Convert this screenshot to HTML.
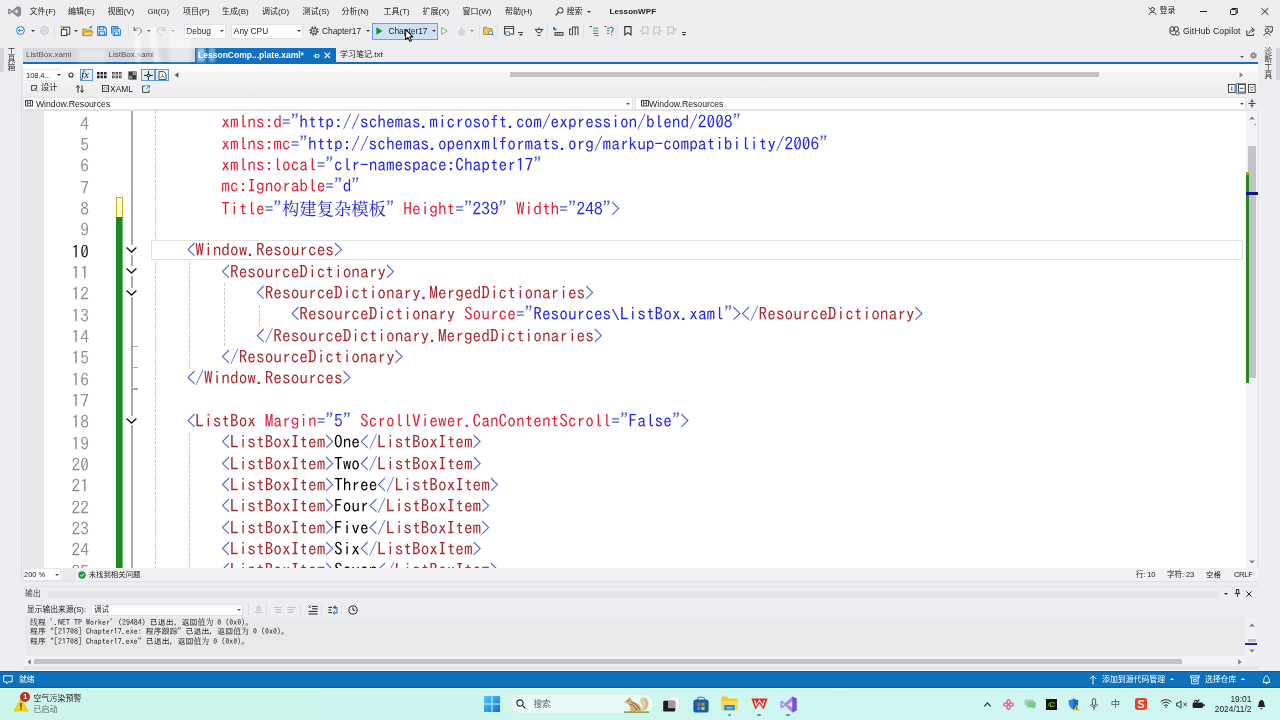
<!DOCTYPE html>
<html lang="zh-CN">
<head>
<meta charset="utf-8">
<title>LessonWPF - Microsoft Visual Studio</title>
<style>
*{box-sizing:border-box;margin:0;padding:0}
html,body{width:1280px;height:720px;overflow:hidden;background:#eeeef2}
body{font-family:"Liberation Sans","Noto Sans CJK SC",sans-serif;font-size:8px;color:#1e1e1e;position:relative}
.abs,#app *{position:absolute}
#app{position:absolute;left:0;top:0;width:1280px;height:720px;overflow:hidden;background:#eeeef2;filter:blur(.35px)}
#app span{position:static}
.tx{white-space:nowrap;line-height:10px;height:10px}
svg{overflow:visible}

.m{top:6.9px}
.dd{width:0;height:0;border-left:2.1px solid transparent;border-right:2.1px solid transparent;border-top:2.4px solid #3c3c3c}
.du{width:0;height:0;border-left:2.6px solid transparent;border-right:2.6px solid transparent;border-bottom:2.9px solid #3c3c3c}
.sep{top:3px;width:1px;height:12.5px;background:#dfe0e4}
.combo{background:#fff;border:1px solid #e2e3e8}

.vc{font-size:8px;color:#3a3a3a;width:8px;text-align:center}
.vt{writing-mode:vertical-rl;height:auto;width:10px;line-height:10px;font-size:7.8px;color:#444;letter-spacing:0}

.ot{left:7.6px;height:9.75px;line-height:9.75px;font-size:7.9px;font-family:"IPAGothic","Noto Serif CJK SC","Noto Sans CJK SC",monospace;color:#1e1e1e;white-space:pre;letter-spacing:.05px}
.run{top:26.4px;width:3.4px;height:1.8px;border-radius:1px;background:#7c8a88}
/* ---------- editor ---------- */
#editor{left:22.5px;top:111.3px;width:1223.5px;height:456.8px;background:#fff;overflow:hidden}
#editor .gut{left:0;top:0;width:21.2px;height:100%;background:#e6e7e8}
.ln{left:-.3px;width:66.6px;text-align:right;font:17.33px/21.333px "IPAGothic","Liberation Mono",monospace;color:#8f8f8f;height:21.333px;white-space:pre}
.ln.cur{color:#1e1e1e}
.cl{margin-top:-1.3px;font:17.33px/21.333px "IPAGothic","Liberation Mono",monospace;height:21.333px;white-space:pre;color:#000}
.cl .d{color:#5562d4}
.cl .v{color:#2626e0}
.cl .e{color:#a62c34}
.cl .a{color:#e2223a}
.cl .t{color:#000}
.cl .bs{display:inline-block;width:8.667px;font-family:'Liberation Mono',monospace;font-size:15px;text-indent:-.3px;vertical-align:baseline}
.cl .cj{font-family:"Noto Serif CJK SC","Noto Sans CJK SC",serif}
.guide{width:1px;background:repeating-linear-gradient(180deg,#c9c9c9 0 3px,transparent 3px 4.6px)}
</style>
</head>
<body>
<div id="app">


<!-- ================= TITLE / MENU BAR ================= -->
<div id="menubar" style="left:0;top:0;width:1280px;height:22px;background:#eeeef1">
  <svg style="left:8px;top:5.5px" width="13" height="11" viewBox="0 0 26 22"><path d="M19 0 L26 3 V19 L19 22 L8 12.5 L3 17 L0 15.5 V6.5 L3 5 L8 9.5 Z M19 6.5 L12.5 11 L19 15.5 Z M2.8 8.3 V13.7 L5.8 11 Z" fill="#8c8c93" fill-rule="evenodd"/></svg>
  <div class="tx m" style="left:29.5px">文件(F)</div>
  <div class="tx m" style="left:68px">编辑(E)</div>
  <div class="tx m" style="left:107.5px">视图(V)</div>
  <div class="tx m" style="left:147.5px">Git(G)</div>
  <div class="tx m" style="left:183px">项目(P)</div>
  <div class="tx m" style="left:222px">生成(B)</div>
  <div class="tx m" style="left:262px">调试(D)</div>
  <div class="tx m" style="left:302.5px">测试(S)</div>
  <div class="tx m" style="left:341.5px">分析(N)</div>
  <div class="tx m" style="left:383.5px">工具(T)</div>
  <div class="tx m" style="left:422.5px">扩展(X)</div>
  <div class="tx m" style="left:462.5px">窗口(W)</div>
  <div class="tx m" style="left:505px">帮助(H)</div>
  <svg style="left:554.5px;top:6.5px" width="9" height="9" viewBox="0 0 9 9"><circle cx="5.4" cy="3.4" r="2.7" fill="none" stroke="#333" stroke-width="1"/><path d="M3.4 5.4 L0.6 8.3" stroke="#333" stroke-width="1.1"/></svg>
  <div class="tx m" style="left:566.5px">搜索</div>
  <div class="dd" style="left:586.5px;top:10.5px"></div>
  <div class="tx m" style="left:609.5px;font-weight:bold;letter-spacing:.1px">LessonWPF</div>
  <!-- sign in -->
  <svg style="left:1147.5px;top:7px" width="9" height="8" viewBox="0 0 9 8"><circle cx="4.6" cy="2.4" r="1.9" fill="none" stroke="#333" stroke-width="1"/><path d="M1 7.6 C1.6 4.6 7.4 4.6 8.2 7.6" fill="none" stroke="#333" stroke-width="1"/><path d="M0.3 0.5 L2.2 2.2" stroke="#333" stroke-width=".9"/></svg>
  <div class="tx m" style="left:1159.5px;top:5.6px">登录</div>
  <div style="left:1200px;top:10.6px;width:6.6px;height:1px;background:#222"></div>
  <svg style="left:1230px;top:8px" width="8" height="7" viewBox="0 0 8 7"><rect x=".5" y="1.6" width="5.6" height="4.9" rx="1" fill="none" stroke="#222" stroke-width="1"/><path d="M2 1.2 V.5 H7.3 V5.2 H6.6" fill="none" stroke="#222" stroke-width="1"/></svg>
  <svg style="left:1261px;top:8px" width="8" height="7" viewBox="0 0 8 7"><path d="M.4 .2 L7.4 6.8 M7.4 .2 L.4 6.8" stroke="#222" stroke-width="1"/></svg>
</div>

<!-- ================= MAIN TOOLBAR ================= -->
<div id="toolbar" style="left:0;top:22px;width:1280px;height:25px;background:#eeeef1">
  <!-- back / forward -->
  <svg style="left:16.2px;top:4.2px" width="9" height="9" viewBox="0 0 9 9"><circle cx="4.5" cy="4.5" r="3.9" fill="#f4f9ff" stroke="#1b7fd6" stroke-width="1"/><path d="M6.6 4.5 H2.6 M4.2 2.8 L2.5 4.5 L4.2 6.2" fill="none" stroke="#1b7fd6" stroke-width=".9"/></svg>
  <div class="dd" style="left:31px;top:8px"></div>
  <svg style="left:40px;top:4.2px" width="9" height="9" viewBox="0 0 9 9"><circle cx="4.5" cy="4.5" r="3.9" fill="#e3e3e7" stroke="#c9c9ce" stroke-width="1"/><path d="M2.4 4.5 H6.4" stroke="#c4c4ca" stroke-width=".9"/></svg>
  <div class="sep" style="left:53.5px"></div>
  <!-- new item -->
  <svg style="left:60px;top:3px" width="12" height="12" viewBox="0 0 12 12"><rect x="3.6" y="2.2" width="6.2" height="7" fill="#f7f7f7" stroke="#3a3a3a" stroke-width="1"/><rect x="1.4" y="4.6" width="5.4" height="6" fill="#f7f7f7" stroke="#3a3a3a" stroke-width="1"/><path d="M1.8 .4 V3.4 M.3 1.9 H3.3" stroke="#c89a16" stroke-width="1"/></svg>
  <div class="dd" style="left:74.2px;top:8px"></div>
  <!-- open -->
  <svg style="left:82px;top:3.5px" width="12" height="11" viewBox="0 0 12 11"><path d="M.8 9.6 V3 H4.2 L5.2 4.2 H9.4 V9.6 Z" fill="#e8c35a" stroke="#b98a12" stroke-width=".9"/><path d="M.8 9.6 L2.6 5.8 H11 L9.4 9.6 Z" fill="#f2d679" stroke="#b98a12" stroke-width=".8"/><path d="M7 2.4 L9.6 .6 M9.6 .6 H8 M9.6 .6 V2.2" fill="none" stroke="#2a7fcf" stroke-width=".9"/></svg>
  <!-- save -->
  <svg style="left:97.3px;top:4px" width="10" height="10" viewBox="0 0 10 10"><path d="M.7 .7 H7.6 L9.3 2.4 V9.3 H.7 Z" fill="#e6f1fb" stroke="#1c7ad1" stroke-width="1.1"/><rect x="2.6" y=".9" width="4.2" height="2.8" fill="none" stroke="#1c7ad1" stroke-width=".9"/><rect x="2.4" y="5.8" width="5.2" height="3.4" fill="none" stroke="#1c7ad1" stroke-width=".9"/></svg>
  <svg style="left:110.8px;top:4px" width="10" height="10" viewBox="0 0 10 10"><path d="M2 2 H8 L9.4 3.4 V9.4 H2 Z" fill="#e6f1fb" stroke="#1c7ad1" stroke-width="1"/><path d="M.6 7.6 V.6 H7" fill="none" stroke="#1c7ad1" stroke-width="1"/><rect x="3.6" y="6" width="4" height="3.2" fill="none" stroke="#1c7ad1" stroke-width=".8"/><rect x="3.8" y="2.2" width="3" height="2" fill="none" stroke="#1c7ad1" stroke-width=".8"/></svg>
  <div class="sep" style="left:127.5px"></div>
  <!-- undo / redo -->
  <svg style="left:132.5px;top:4px" width="10" height="10" viewBox="0 0 10 10"><path d="M1.2 1 V4.4 H4.6" fill="none" stroke="#3a3a3a" stroke-width="1"/><path d="M1.4 4.2 C3 1.2 7.4 1.2 8.2 4 C8.8 6.2 6.6 8.4 4.4 9.4" fill="none" stroke="#3a3a3a" stroke-width="1"/></svg>
  <div class="dd" style="left:146.5px;top:8px"></div>
  <svg style="left:155.5px;top:4px;opacity:.35" width="10" height="10" viewBox="0 0 10 10"><path d="M8.8 1 V4.4 H5.4" fill="none" stroke="#8a8a8a" stroke-width="1"/><path d="M8.6 4.2 C7 1.2 2.6 1.2 1.8 4 C1.2 6.2 3.4 8.4 5.6 9.4" fill="none" stroke="#8a8a8a" stroke-width="1"/></svg>
  <div class="dd" style="left:170.5px;top:8px;opacity:.45"></div>
  <!-- Debug combo -->
  <div class="combo" style="left:183.7px;top:1.7px;width:42.5px;height:15.2px"></div>
  <div class="tx" style="left:186.2px;top:4.2px;font-size:8.4px">Debug</div>
  <div class="dd" style="left:220.2px;top:8.3px"></div>
  <!-- Any CPU combo -->
  <div class="combo" style="left:231px;top:1.7px;width:72.3px;height:15.2px"></div>
  <div class="tx" style="left:233.8px;top:4.2px;font-size:8.4px">Any CPU</div>
  <div class="dd" style="left:297.2px;top:8.3px"></div>
  <!-- startup project -->
  <svg style="left:308.6px;top:4px" width="10" height="10" viewBox="0 0 10 10"><circle cx="5" cy="5" r="3.9" fill="none" stroke="#3a3a3a" stroke-width="1.3" stroke-dasharray="1.55 1.51"/><circle cx="5" cy="5" r="2.9" fill="none" stroke="#3a3a3a" stroke-width=".9"/><circle cx="5" cy="5" r="1.1" fill="none" stroke="#3a3a3a" stroke-width=".8"/></svg>
  <div class="tx" style="left:322px;top:4.2px;font-size:8.4px">Chapter17</div>
  <div class="dd" style="left:366.3px;top:8.3px"></div>
  <!-- start button (hover) -->
  <div style="left:372px;top:.8px;width:65.6px;height:17px;background:#cde2f5;border:1px solid #6aa3d8"></div>
  <svg style="left:376.2px;top:4.6px" width="7" height="8" viewBox="0 0 7 8"><path d="M.4 .2 L6.6 4 L.4 7.8 Z" fill="#16922e"/></svg>
  <div class="tx" style="left:388.4px;top:4.2px;font-size:8.4px">Chapter17</div>
  <div class="dd" style="left:432.2px;top:8.3px"></div>
  <!-- mouse cursor -->
  <svg style="left:404.6px;top:7.2px" width="9" height="13.5" viewBox="0 0 8 12"><path d="M.6 .6 V9.4 L2.7 7.5 L4.2 11 L5.7 10.4 L4.2 7 H7 Z" fill="#fff" stroke="#111" stroke-width=".9" stroke-linejoin="round"/></svg>
  <svg style="left:441.2px;top:4.6px" width="7" height="8" viewBox="0 0 7 8"><path d="M.6 .6 L6.2 4 L.6 7.4 Z" fill="#f0fbf0" stroke="#66b072" stroke-width=".9"/></svg>
  <svg style="left:456.5px;top:4px;opacity:.55" width="9" height="10" viewBox="0 0 9 10"><path d="M4.5 .5 C7 3 8.4 4.6 8 6.8 C7.6 8.8 6 9.6 4.5 9.6 C3 9.6 1.4 8.8 1 6.8 C.8 5.4 1.6 4.4 2.6 3.6 C2.8 4.6 3.4 5 3.8 5 C3.4 3.4 3.8 1.6 4.5 .5 Z" fill="#c2c2c8"/></svg>
  <div class="dd" style="left:470.2px;top:8.3px;opacity:.5"></div>
  <div class="sep" style="left:479px"></div>
  <svg style="left:483px;top:4px" width="11" height="10" viewBox="0 0 11 10"><path d="M.6 8.4 V1.2 H3.6 L4.6 2.4 H8.8 V8.4 Z" fill="#e9c865" stroke="#b98a12" stroke-width=".9"/><circle cx="7.6" cy="6.6" r="2" fill="#eaf3fc" stroke="#2a7fcf" stroke-width=".9"/><path d="M9 8 L10.6 9.6" stroke="#2a7fcf" stroke-width="1"/></svg>
  <div class="sep" style="left:497px"></div>
  <svg style="left:503.5px;top:4px" width="11" height="10" viewBox="0 0 11 10"><rect x=".6" y=".6" width="9" height="7.4" fill="#fbfbfd" stroke="#3a3a3a" stroke-width="1"/><path d="M.6 2.6 H9.6" stroke="#3a3a3a" stroke-width="1"/><rect x="1.8" y="5.8" width="3.6" height="3.6" fill="#eaf3fc" stroke="#2a7fcf" stroke-width=".9"/></svg>
  <div class="dd" style="left:518.5px;top:12.3px"></div>
  <div style="left:518.3px;top:10.3px;width:4.4px;height:.8px;background:#444"></div>
  <svg style="left:533.5px;top:4.6px" width="10" height="9" viewBox="0 0 10 9"><path d="M.8 2.4 H9.2 M2 2.4 C2 7 8 7 8 2.4 M5 .4 V2.4 M3.4 8.4 H6.6" fill="none" stroke="#3a3a3a" stroke-width="1"/></svg>
  <div class="sep" style="left:547px"></div>
  <svg style="left:552.5px;top:4px" width="11" height="10" viewBox="0 0 11 10"><path d="M.6 .8 L3.6 3.8 L.6 3.8 Z" fill="#2a7fcf" stroke="#2a7fcf" stroke-width=".8"/><rect x="2" y="6.6" width="8" height="2.6" fill="none" stroke="#3a3a3a" stroke-width="1"/><path d="M4.4 6.6 V9 M6.8 6.6 V9" stroke="#3a3a3a" stroke-width=".7"/></svg>
  <svg style="left:568.5px;top:4px" width="10" height="10" viewBox="0 0 10 10"><path d="M3.4 1 H9.2 M3.4 1 V9.2 M6.2 1 V9.2 M9 1 V9.2 M.6 3 H2.4 M.6 3 V8.6 H2.4" fill="none" stroke="#3a3a3a" stroke-width="1"/></svg>
  <div class="sep" style="left:582.8px"></div>
  <svg style="left:588.5px;top:4px" width="10" height="10" viewBox="0 0 10 10"><path d="M4 2.2 H9.4 M4 4.8 H9.4 M4 7.4 H9.4 M5.4 9.6 H9.4" stroke="#3f8f63" stroke-width="1"/><path d="M.6 .6 H3" stroke="#3a3a3a" stroke-width="1"/></svg>
  <svg style="left:603.5px;top:4px" width="10" height="10" viewBox="0 0 10 10"><path d="M3 2.2 H6 M3 4.8 H5.4 M3 7.4 H5.4" stroke="#3f8f63" stroke-width="1"/><path d="M6.2 1.4 C8.4 .8 9.6 2.4 9 4 C8.6 5 7.6 5.4 7.6 6.8 M7.6 8.4 V9.4" fill="none" stroke="#2a6fbf" stroke-width="1.1"/><path d="M.6 .6 H2.4" stroke="#3a3a3a" stroke-width="1"/></svg>
  <div class="sep" style="left:617px"></div>
  <svg style="left:624px;top:4px" width="8" height="10" viewBox="0 0 8 10"><path d="M.8 .6 H7 V9 L3.9 6.6 L.8 9 Z" fill="none" stroke="#2c2c2c" stroke-width="1.1"/></svg>
  <svg style="left:639px;top:4px;opacity:.32" width="10" height="10" viewBox="0 0 10 10"><path d="M3.4 .8 H9 V8.6 L6.2 6.4 L3.4 8.6 Z M.4 5 H2.6" fill="none" stroke="#666" stroke-width="1"/></svg>
  <svg style="left:653px;top:4px;opacity:.32" width="10" height="10" viewBox="0 0 10 10"><path d="M.8 .8 H6.4 V8.6 L3.6 6.4 L.8 8.6 Z M7.4 5 H9.6" fill="none" stroke="#666" stroke-width="1"/></svg>
  <svg style="left:667px;top:4px;opacity:.32" width="10" height="10" viewBox="0 0 10 10"><path d="M.8 .8 H6.4 V8.6 L3.6 6.4 L.8 8.6 Z M7 2 L9.6 5 M9.6 2 L7 5" fill="none" stroke="#666" stroke-width="1"/></svg>
  <div class="dd" style="left:682px;top:12.3px"></div>
  <div style="left:681.8px;top:10.3px;width:4.4px;height:.8px;background:#444"></div>
  <!-- right side: copilot -->
  <svg style="left:1168.5px;top:4px" width="11" height="10" viewBox="0 0 11 10"><circle cx="3.2" cy="3" r="2.3" fill="none" stroke="#333" stroke-width="1"/><circle cx="7.2" cy="3" r="2.3" fill="none" stroke="#333" stroke-width="1"/><path d="M1 4.4 V7 C2.4 9.2 6 9.2 6.6 8.4" fill="none" stroke="#333" stroke-width="1"/><circle cx="8.4" cy="7.4" r="1.9" fill="#f4f4f6" stroke="#333" stroke-width=".9"/></svg>
  <div class="tx" style="left:1183px;top:3.8px;font-size:8.6px;letter-spacing:.12px">GitHub Copilot</div>
  <svg style="left:1246px;top:4.5px" width="10" height="9" viewBox="0 0 10 9"><path d="M.8 3.4 V8.4 H7.6 V6.6" fill="none" stroke="#333" stroke-width="1"/><path d="M3 6.4 C3.4 4 5 3 7 3 M5.6 .8 L8.4 3 L5.6 5.2" fill="none" stroke="#333" stroke-width="1"/></svg>
  <svg style="left:1263px;top:4px" width="10" height="10" viewBox="0 0 10 10"><path d="M2.4 .8 H9.4 V5.4 H8 L8 7 L6.6 5.4" fill="none" stroke="#333" stroke-width=".9"/><circle cx="4" cy="4.4" r="1.8" fill="#eeeef1" stroke="#333" stroke-width=".9"/><path d="M.8 9.6 C1.2 6.6 6.8 6.6 7.2 9.6" fill="none" stroke="#333" stroke-width=".9"/></svg>
</div>


<!-- ================= SIDE STRIPS ================= -->
<div style="left:0;top:48px;width:3.9px;height:23.8px;background:#d3d5dc"></div>
<div class="tx vc" style="left:7.5px;top:47.2px">工</div><div class="tx vc" style="left:7.5px;top:55.1px">具</div><div class="tx vc" style="left:7.5px;top:63.0px">箱</div>
<div style="left:21.4px;top:63px;width:1.1px;height:518px;background:#dcdde1"></div>
<div style="left:1276.1px;top:48.2px;width:4px;height:31.5px;background:#d4d4e0"></div>
<div class="tx vc" style="left:1264.2px;top:47.4px">诊</div><div class="tx vc" style="left:1264.2px;top:55.2px">断</div><div class="tx vc" style="left:1264.2px;top:63.1px">工</div><div class="tx vc" style="left:1264.2px;top:70.9px">具</div>
<div style="left:1257.4px;top:63px;width:1px;height:608px;background:#e3e4e8"></div>

<!-- ================= DOCUMENT TABS ================= -->
<div id="tabs" style="left:22.5px;top:47.8px;width:1235px;height:16px">
  <div style="left:0;top:0;width:173px;height:14.6px;background:#d8d9dd"></div>
  <div class="tx" style="left:3.5px;top:2.4px;color:#333;opacity:.8">ListBox.xaml</div>
  <div class="tx" style="left:86px;top:2.4px;color:#333;opacity:.8">ListBox.xaml</div>
  <div style="left:172.8px;top:0;width:140.8px;height:15px;background:#0e70c0"></div>
  <div class="tx" style="left:175.6px;top:2.3px;color:#fff;font-weight:bold;font-size:8.5px">LessonComp...plate.xaml*</div>
  <svg style="left:290px;top:5px" width="7" height="6" viewBox="0 0 7 6"><path d="M.2 3 H2.6 M2.6 .8 V5.2 M2.6 1.6 H6 V4.2 H2.6" fill="none" stroke="#fff" stroke-width=".9"/></svg>
  <svg style="left:301.8px;top:4.6px" width="7" height="7" viewBox="0 0 7 7"><path d="M.6 .6 L6 6 M6 .6 L.6 6" stroke="#fff" stroke-width="1.1"/></svg>
  <div class="tx" style="left:317.6px;top:2.4px;color:#1e1e1e">学习笔记.txt</div>
  <div style="left:0;top:14.5px;width:1235px;height:1.5px;background:#176fb2"></div>
  <div class="dd" style="left:1217.6px;top:8.6px;border-top-color:#555"></div>
  <svg style="left:1227.3px;top:4.4px" width="7" height="7" viewBox="0 0 7 7"><circle cx="3.5" cy="3.5" r="2.7" fill="#8b8b90"/><circle cx="3.5" cy="3.5" r="3" fill="none" stroke="#8b8b90" stroke-width="1" stroke-dasharray="1.2 1.15"/><circle cx="3.5" cy="3.5" r=".9" fill="#e8e8ec"/></svg>
  <!-- translucent watermark remnants -->
  <div style="left:55px;top:1px;width:28px;height:13px;background:rgba(255,255,255,.35);filter:blur(2px)"></div>
  <div style="left:112px;top:-22px;width:6px;height:36px;background:rgba(255,255,255,.55);filter:blur(1.2px)"></div>
  <div style="left:128px;top:-20px;width:7px;height:34px;background:rgba(255,255,255,.5);filter:blur(1.2px);transform:skewX(8deg)"></div>
  <div style="left:146px;top:-18px;width:22px;height:32px;background:rgba(255,255,255,.4);filter:blur(1.6px)"></div>
  <div style="left:174px;top:0;width:8px;height:14px;background:rgba(255,255,255,.55);filter:blur(1px)"></div>
  <div style="left:186px;top:0;width:6px;height:14px;background:rgba(255,255,255,.4);filter:blur(1px)"></div>
</div>

<!-- ================= DESIGNER TOOLBAR ================= -->
<div id="dtool" style="left:22.5px;top:63.7px;width:1235px;height:33.3px;background:linear-gradient(180deg,#fdfdfe 0,#fbfbfc 20%,#f5f5f6 26%,#ededef 100%)">
  <div class="combo" style="left:.8px;top:5.6px;width:39px;height:11.4px;border-color:#ececf0"></div>
  <div class="tx" style="left:3.6px;top:7px;font-size:7.6px;letter-spacing:-.15px">108.4...</div>
  <div class="dd" style="left:34.4px;top:10.4px"></div>
  <svg style="left:45.6px;top:8.4px" width="6" height="6" viewBox="0 0 6 6"><circle cx="3" cy="3" r="2" fill="none" stroke="#333" stroke-width="1.1"/></svg>
  <div style="left:57px;top:5px;width:13.6px;height:12.6px;background:#e2eefa;border:1px solid #5c9bd6"></div>
  <div class="tx" style="left:58.8px;top:5.2px;font:italic 10.4px/11px 'Liberation Serif',serif;color:#222">fx</div>
  <svg style="left:74.4px;top:8px" width="10" height="7" viewBox="0 0 10 7"><path d="M0 0H2.6V2.6H0Z M3.5 0H6.1V2.6H3.5Z M7 0H9.6V2.6H7Z M0 3.6H2.6V6.2H0Z M3.5 3.6H6.1V6.2H3.5Z M7 3.6H9.6V6.2H7Z" fill="#2a2a2a"/></svg>
  <svg style="left:89.4px;top:8px" width="10" height="7" viewBox="0 0 10 7"><path d="M0 0H2.6V2.6H0Z M3.5 0H6.1V2.6H3.5Z M7 0H9.6V2.6H7Z M0 3.6H2.6V6.2H0Z M3.5 3.6H6.1V6.2H3.5Z M7 3.6H9.6V6.2H7Z" fill="#4a4a4a"/><path d="M1 1H1.8V1.8H1Z M4.4 1H5.2V1.8H4.4Z M7.9 1H8.7V1.8H7.9Z M1 4.5H1.8V5.3H1Z M4.4 4.5H5.2V5.3H4.4Z M7.9 4.5H8.7V5.3H7.9Z" fill="#f5f5f7"/></svg>
  <svg style="left:105.5px;top:7.2px" width="9" height="9" viewBox="0 0 9 9"><rect x=".4" y=".4" width="8.2" height="8.2" fill="#3a3a3a"/><rect x="4.6" y="1" width="3.4" height="3.2" fill="#9a9a9a"/><rect x="1" y="4.8" width="3.2" height="3.2" fill="#8a8a8a"/></svg>
  <div style="left:118px;top:5px;width:14.2px;height:12.6px;background:#e2eefa;border:1px solid #5c9bd6"></div>
  <svg style="left:121px;top:7.2px" width="9" height="9" viewBox="0 0 9 9"><path d="M4.4 0 V3 M4.4 5.8 V8.8 M0 4.4 H3 M5.8 4.4 H8.8" stroke="#222" stroke-width="1"/><rect x="3.4" y="3.4" width="2" height="2" fill="none" stroke="#222" stroke-width=".7"/></svg>
  <div style="left:132.8px;top:5px;width:14.2px;height:12.6px;background:#e2eefa;border:1px solid #5c9bd6"></div>
  <svg style="left:135.8px;top:7px" width="9" height="9" viewBox="0 0 9 9"><path d="M1 8.6 V.6 H5.6 L8 3 V8.6 Z" fill="#fafcff" stroke="#333" stroke-width=".9"/><path d="M2.8 6.8 C2.8 4.8 6 4.8 6 6.8 M4.4 3.2 V4.8" fill="none" stroke="#2b7a3d" stroke-width=".9"/></svg>
  <svg style="left:151px;top:8.4px" width="5" height="6" viewBox="0 0 5 6"><path d="M4.4 .2 L.6 3 L4.4 5.8 Z" fill="#555"/></svg>
  <!-- horizontal scrollbar of designer -->
  <div style="left:487.5px;top:8.2px;width:589px;height:5.6px;background:#c4c5c9"></div>
  <svg style="left:1216px;top:8.4px" width="5" height="6" viewBox="0 0 5 6"><path d="M.6 .2 L4.4 3 L.6 5.8 Z" fill="#8a8a8e"/></svg>
  <!-- design / xaml row -->
  <svg style="left:8.8px;top:21.2px" width="7" height="7" viewBox="0 0 7 7"><path d="M.6 .6 H5.6 V3 M.6 .6 V5.4 H3" fill="none" stroke="#333" stroke-width=".9"/><path d="M4 3.6 L6.6 6.4 M4 3.6 V5.8 M4 3.6 H6" stroke="#333" stroke-width=".8" fill="none"/></svg>
  <div class="tx" style="left:18.6px;top:19.8px;font-size:8.2px">设计</div>
  <svg style="left:53.4px;top:21px" width="8" height="8" viewBox="0 0 8 8"><path d="M2 7.6 V.8 M.4 2.6 L2 .6 L3.6 2.6 M6 .4 V7.2 M4.4 5.4 L6 7.4 L7.6 5.4" fill="none" stroke="#222" stroke-width=".95"/></svg>
  <svg style="left:79px;top:21.6px" width="7" height="7" viewBox="0 0 7 7"><rect x=".5" y=".5" width="6" height="6" fill="none" stroke="#333" stroke-width=".9"/><path d="M2.8 2.2 L1.8 3.5 L2.8 4.8 M4.2 2.2 L5.2 3.5 L4.2 4.8" fill="none" stroke="#333" stroke-width=".7"/></svg>
  <div class="tx" style="left:87.6px;top:20px;font-size:8.4px">XAML</div>
  <svg style="left:119px;top:21px" width="8" height="8" viewBox="0 0 8 8"><path d="M3.4 1 H.6 V7.4 H7 V4.6" fill="none" stroke="#333" stroke-width=".9"/><path d="M4.6 .6 H7.4 V3.4 M7.4 .6 L3.8 4.2" fill="none" stroke="#2a7fcf" stroke-width=".9"/></svg>
  <!-- split buttons (right) -->
  <svg style="left:1205px;top:20.4px" width="8" height="9" viewBox="0 0 8 9"><rect x=".5" y=".5" width="6.6" height="8" fill="#fdfdfd" stroke="#3a3a3a" stroke-width=".9"/><path d="M3.8 2.4 V6.6" stroke="#3a3a3a" stroke-width=".9"/></svg>
  <div style="left:1213.6px;top:19.6px;width:10.4px;height:10.6px;background:#cfe2f5;border:1px solid #5c9bd6"></div>
  <svg style="left:1215.2px;top:20.6px" width="8" height="9" viewBox="0 0 8 9"><rect x=".5" y=".5" width="6.6" height="7.6" fill="#fdfdfd" stroke="#3a3a3a" stroke-width=".9"/><path d="M1.8 4.3 H5.8" stroke="#3a3a3a" stroke-width=".9"/></svg>
  <svg style="left:1225.4px;top:20.4px" width="8" height="9" viewBox="0 0 8 9"><rect x=".5" y=".5" width="6.6" height="8" fill="#fdfdfd" stroke="#3a3a3a" stroke-width=".9"/><path d="M2.2 2.4 L3.8 4 L5.4 2.4 M2.2 4.8 L3.8 6.4 L5.4 4.8" fill="none" stroke="#3a3a3a" stroke-width=".8"/></svg>
</div>

<!-- ================= NAV BAR ================= -->
<div id="nav" style="left:22.5px;top:97px;width:1235px;height:14.3px;background:#eeeef2">
  <div style="left:0;top:0;width:610px;height:13.4px;background:#fff;border:1px solid #e3e4e8"></div>
  <div style="left:612.6px;top:0;width:610.8px;height:13.4px;background:#fff;border:1px solid #e3e4e8"></div>
  <div style="left:0;top:13.4px;width:1235px;height:1px;background:#dfe0e4"></div>
  <svg style="left:2.5px;top:3.4px" width="8" height="7" viewBox="0 0 8 7"><rect x=".5" y=".6" width="7" height="5.4" fill="none" stroke="#333" stroke-width=".9"/><path d="M2.6 .6 V6 M5.4 .6 V6 M2.6 3.3 H5.4" stroke="#333" stroke-width=".8"/></svg>
  <div class="tx" style="left:13.4px;top:2px;font-size:8.7px">Window.Resources</div>
  <div class="dd" style="left:603px;top:6px;border-top-color:#555"></div>
  <svg style="left:618.4px;top:3.4px" width="8" height="7" viewBox="0 0 8 7"><rect x=".5" y=".6" width="7" height="5.4" fill="none" stroke="#333" stroke-width=".9"/><path d="M2.6 .6 V6 M5.4 .6 V6 M2.6 3.3 H5.4" stroke="#333" stroke-width=".8"/></svg>
  <div class="tx" style="left:626.6px;top:2px;font-size:8.7px">Window.Resources</div>
  <div class="dd" style="left:1217px;top:6px;border-top-color:#555"></div>
  <svg style="left:1225.6px;top:2.4px" width="8" height="9" viewBox="0 0 8 9"><path d="M.4 4.4 H7.6 M4 .4 V3 M2.6 1.8 L4 3.2 L5.4 1.8 M4 8.4 V5.8 M2.6 7 L4 5.6 L5.4 7" fill="none" stroke="#222" stroke-width=".9"/></svg>
</div>

<!-- ================= EDITOR V-SCROLLBAR ================= -->
<div id="vsb" style="left:1246px;top:111.3px;width:11.4px;height:456.2px;background:#f3f3f5">
  <svg style="left:3px;top:4.4px" width="6" height="4" viewBox="0 0 6 4"><path d="M.2 3.6 L3 .4 L5.8 3.6 Z" fill="#7e7e84"/></svg>
  <div style="left:8px;top:12.4px;width:2.4px;height:1px;background:#999"></div>
  <div style="left:1.8px;top:35px;width:8px;height:232px;background:#c2c3c9"></div>
  <div style="left:0;top:61px;width:2.5px;height:3px;background:#a9a51e"></div>
  <div style="left:0;top:63.5px;width:2.5px;height:208px;background:#1f8a1f"></div>
  <div style="left:-.6px;top:81.2px;width:12.2px;height:2.3px;background:#10108c"></div>
  <svg style="left:3px;top:448.4px" width="6" height="4" viewBox="0 0 6 4"><path d="M.2 .4 L3 3.6 L5.8 .4 Z" fill="#7e7e84"/></svg>
</div>

<!-- ================= EDITOR ================= -->
<div id="editor">
  <div class="gut"></div>
  <!-- change bars -->
  <div style="left:93.5px;top:85.5px;width:6.6px;height:21px;background:#fffbd0;border:1.3px solid #c9b21e"></div>
  <div style="left:93.5px;top:106px;width:6px;height:352px;background:#1f8a1f"></div><div style="left:99.5px;top:106px;width:1px;height:352px;background:rgba(31,138,31,.6)"></div>
  <!-- outlining line -->
  <div style="left:108.4px;top:0;width:1.7px;height:100%;background:#a9a9a9"></div>
  <div style="left:103px;top:133.9px;width:12.6px;height:9.4px;background:#fff"></div>
  <svg style="left:103.8px;top:135.9px" width="11" height="6" viewBox="0 0 11 6"><path d="M.6 .6 L5.5 5 L10.4 .6" fill="none" stroke="#111" stroke-width="1.35"/></svg>
  <div style="left:103px;top:155.0px;width:12.6px;height:9.4px;background:#fff"></div>
  <svg style="left:103.8px;top:157.0px" width="11" height="6" viewBox="0 0 11 6"><path d="M.6 .6 L5.5 5 L10.4 .6" fill="none" stroke="#111" stroke-width="1.35"/></svg>
  <div style="left:103px;top:176.3px;width:12.6px;height:9.4px;background:#fff"></div>
  <svg style="left:103.8px;top:178.3px" width="11" height="6" viewBox="0 0 11 6"><path d="M.6 .6 L5.5 5 L10.4 .6" fill="none" stroke="#111" stroke-width="1.35"/></svg>
  <div style="left:103px;top:304.6px;width:12.6px;height:9.4px;background:#fff"></div>
  <svg style="left:103.8px;top:306.6px" width="11" height="6" viewBox="0 0 11 6"><path d="M.6 .6 L5.5 5 L10.4 .6" fill="none" stroke="#111" stroke-width="1.35"/></svg>
  <div style="left:109.8px;top:234.6px;width:6px;height:1.1px;background:#a9a9a9"></div>
  <div style="left:109.8px;top:255.9px;width:6px;height:1.1px;background:#a9a9a9"></div>
  <div style="left:109.8px;top:277.2px;width:6px;height:1.1px;background:#a9a9a9"></div>
  <!-- indent guides -->
  <div class="guide" style="left:132.2px;top:0;height:128px"></div>
  <div class="guide" style="left:132.2px;top:150.7px;height:310px"></div>
  <div class="guide" style="left:166.8px;top:150.7px;height:106.6px"></div>
  <div class="guide" style="left:201.5px;top:172px;height:64px"></div>
  <div class="guide" style="left:236.2px;top:193.4px;height:21.3px"></div>
  <div class="guide" style="left:166.8px;top:321.4px;height:140px"></div>
  <!-- current line box -->
  <div style="left:128.5px;top:129.2px;width:1092px;height:19.6px;border:1.4px solid #e3e3e3;background:#fff"></div>
<div class="ln" style="top:1.40px">4</div>
<div class="cl" style="top:1.40px;left:198.83px"><span class="a">xmlns:d</span><span class="d">="</span><span class="v">http://schemas.microsoft.com/expression/blend/2008</span><span class="d">"</span></div>
<div class="ln" style="top:22.73px">5</div>
<div class="cl" style="top:22.73px;left:198.83px"><span class="a">xmlns:mc</span><span class="d">="</span><span class="v">http://schemas.openxmlformats.org/markup-compatibility/2006</span><span class="d">"</span></div>
<div class="ln" style="top:44.07px">6</div>
<div class="cl" style="top:44.07px;left:198.83px"><span class="a">xmlns:local</span><span class="d">="</span><span class="v">clr-namespace:Chapter17</span><span class="d">"</span></div>
<div class="ln" style="top:65.40px">7</div>
<div class="cl" style="top:65.40px;left:198.83px"><span class="a">mc:Ignorable</span><span class="d">="</span><span class="v">d</span><span class="d">"</span></div>
<div class="ln" style="top:86.73px">8</div>
<div class="cl" style="top:86.73px;left:198.83px"><span class="a">Title</span><span class="d">="</span><span class="v cj">构建复杂模板</span><span class="d">"</span> <span class="a">Height</span><span class="d">="</span><span class="v">239</span><span class="d">"</span> <span class="a">Width</span><span class="d">="</span><span class="v">248</span><span class="d">"</span><span class="d">&gt;</span></div>
<div class="ln" style="top:108.07px">9</div>
<div class="ln cur" style="top:129.40px">10</div>
<div class="cl" style="top:129.40px;left:164.17px"><span class="d">&lt;</span><span class="e">Window.Resources</span><span class="d">&gt;</span></div>
<div class="ln" style="top:150.73px">11</div>
<div class="cl" style="top:150.73px;left:198.83px"><span class="d">&lt;</span><span class="e">ResourceDictionary</span><span class="d">&gt;</span></div>
<div class="ln" style="top:172.07px">12</div>
<div class="cl" style="top:172.07px;left:233.50px"><span class="d">&lt;</span><span class="e">ResourceDictionary.MergedDictionaries</span><span class="d">&gt;</span></div>
<div class="ln" style="top:193.40px">13</div>
<div class="cl" style="top:193.40px;left:268.17px"><span class="d">&lt;</span><span class="e">ResourceDictionary</span> <span class="a">Source</span><span class="d">="</span><span class="v">Resources<span class="bs">\</span>ListBox.xaml</span><span class="d">"</span><span class="d">&gt;&lt;/</span><span class="e">ResourceDictionary</span><span class="d">&gt;</span></div>
<div class="ln" style="top:214.73px">14</div>
<div class="cl" style="top:214.73px;left:233.50px"><span class="d">&lt;/</span><span class="e">ResourceDictionary.MergedDictionaries</span><span class="d">&gt;</span></div>
<div class="ln" style="top:236.07px">15</div>
<div class="cl" style="top:236.07px;left:198.83px"><span class="d">&lt;/</span><span class="e">ResourceDictionary</span><span class="d">&gt;</span></div>
<div class="ln" style="top:257.40px">16</div>
<div class="cl" style="top:257.40px;left:164.17px"><span class="d">&lt;/</span><span class="e">Window.Resources</span><span class="d">&gt;</span></div>
<div class="ln" style="top:278.73px">17</div>
<div class="ln" style="top:300.07px">18</div>
<div class="cl" style="top:300.07px;left:164.17px"><span class="d">&lt;</span><span class="e">ListBox</span> <span class="a">Margin</span><span class="d">="</span><span class="v">5</span><span class="d">"</span> <span class="a">ScrollViewer.CanContentScroll</span><span class="d">="</span><span class="v">False</span><span class="d">"</span><span class="d">&gt;</span></div>
<div class="ln" style="top:321.40px">19</div>
<div class="cl" style="top:321.40px;left:198.83px"><span class="d">&lt;</span><span class="e">ListBoxItem</span><span class="d">&gt;</span><span class="t">One</span><span class="d">&lt;/</span><span class="e">ListBoxItem</span><span class="d">&gt;</span></div>
<div class="ln" style="top:342.73px">20</div>
<div class="cl" style="top:342.73px;left:198.83px"><span class="d">&lt;</span><span class="e">ListBoxItem</span><span class="d">&gt;</span><span class="t">Two</span><span class="d">&lt;/</span><span class="e">ListBoxItem</span><span class="d">&gt;</span></div>
<div class="ln" style="top:364.07px">21</div>
<div class="cl" style="top:364.07px;left:198.83px"><span class="d">&lt;</span><span class="e">ListBoxItem</span><span class="d">&gt;</span><span class="t">Three</span><span class="d">&lt;/</span><span class="e">ListBoxItem</span><span class="d">&gt;</span></div>
<div class="ln" style="top:385.40px">22</div>
<div class="cl" style="top:385.40px;left:198.83px"><span class="d">&lt;</span><span class="e">ListBoxItem</span><span class="d">&gt;</span><span class="t">Four</span><span class="d">&lt;/</span><span class="e">ListBoxItem</span><span class="d">&gt;</span></div>
<div class="ln" style="top:406.73px">23</div>
<div class="cl" style="top:406.73px;left:198.83px"><span class="d">&lt;</span><span class="e">ListBoxItem</span><span class="d">&gt;</span><span class="t">Five</span><span class="d">&lt;/</span><span class="e">ListBoxItem</span><span class="d">&gt;</span></div>
<div class="ln" style="top:428.07px">24</div>
<div class="cl" style="top:428.07px;left:198.83px"><span class="d">&lt;</span><span class="e">ListBoxItem</span><span class="d">&gt;</span><span class="t">Six</span><span class="d">&lt;/</span><span class="e">ListBoxItem</span><span class="d">&gt;</span></div>
<div class="ln" style="top:449.40px">25</div>
<div class="cl" style="top:449.40px;left:198.83px"><span class="d">&lt;</span><span class="e">ListBoxItem</span><span class="d">&gt;</span><span class="t">Seven</span><span class="d">&lt;/</span><span class="e">ListBoxItem</span><span class="d">&gt;</span></div>
</div>

<!-- ================= EDITOR STATUS ROW ================= -->
<div id="edstat" style="left:22.5px;top:568px;width:1235px;height:13.2px;background:#f2f2f5">
  <div class="combo" style="left:0;top:.4px;width:38.6px;height:12.4px;border-color:#e6e6ea"></div>
  <div class="tx" style="left:1.6px;top:1.6px;font-size:7.4px">200 %</div>
  <div class="dd" style="left:32.8px;top:5.8px;border-top-color:#555"></div>
  <div style="left:39.4px;top:.4px;width:14px;height:12.4px;background:#e9e9ed"></div>
  <svg style="left:55px;top:2.6px" width="8" height="8" viewBox="0 0 8 8"><circle cx="4" cy="4" r="3.7" fill="#1f9a3c"/><path d="M2.2 4.1 L3.5 5.4 L5.9 2.8" fill="none" stroke="#fff" stroke-width="1"/></svg>
  <div class="tx" style="left:66.2px;top:1.6px;font-size:7.4px;color:#222">未找到相关问题</div>
  <div class="tx" style="left:1113.4px;top:1.6px;font-size:7.6px;letter-spacing:-.15px;color:#222">行: 10</div>
  <div class="tx" style="left:1144.6px;top:1.6px;font-size:7.6px;letter-spacing:-.15px;color:#222">字符: 23</div>
  <div class="tx" style="left:1183.6px;top:1.6px;font-size:7.4px;color:#222">空格</div>
  <div class="tx" style="left:1211.4px;top:1.6px;font-size:7.6px;letter-spacing:-.3px;color:#222">CRLF</div>
  <div style="left:0;top:12.8px;width:1235px;height:.8px;background:#e0e0e5"></div>
</div>

<!-- ================= OUTPUT PANEL ================= -->
<div id="output" style="left:22.5px;top:586.4px;width:1235px;height:84.8px;background:#eeeef2">
  <div style="left:0;top:0;width:1235px;height:1px;background:#e4e4e9"></div>
  <div class="tx" style="left:2.6px;top:3.1px;font-size:7.8px;color:#444">输出</div>
  <div style="left:25px;top:4.9px;width:1170px;height:7.2px;background-color:#ebecef;background-image:radial-gradient(circle,#c8c9cf .5px,transparent .75px);background-size:2px 2px"></div>
  <div class="dd" style="left:1201.4px;top:6.6px;border-top-color:#222"></div>
  <svg style="left:1211.6px;top:3px" width="7" height="8" viewBox="0 0 7 8"><path d="M2 .6 H5 M2.4 .6 V4.4 M4.8 .6 V4.4 M.8 4.6 H6.2 M3.5 4.6 V7.8" fill="none" stroke="#222" stroke-width=".95"/></svg>
  <svg style="left:1223.6px;top:4.2px" width="6" height="6" viewBox="0 0 6 6"><path d="M.4 .4 L5.6 5.6 M5.6 .4 L.4 5.6" stroke="#222" stroke-width="1"/></svg>
  <!-- toolbar -->
  <div class="tx" style="left:4.6px;top:18.6px;font-size:7.75px;color:#222">显示输出来源(S):</div>
  <div class="combo" style="left:68.4px;top:17.2px;width:152.4px;height:12.6px;border-color:#e0e0e6"></div>
  <div class="tx" style="left:71.4px;top:18.6px;font-size:7.6px;color:#222">调试</div>
  <div class="dd" style="left:214.4px;top:22.6px;border-top-color:#555"></div>
  <div class="sep" style="left:225.4px;top:18px;height:11px"></div>
  <svg style="left:231px;top:19px;opacity:.3" width="9" height="9" viewBox="0 0 9 9"><path d="M2 3 H7 M2 5 H7 M.6 7.4 H8.4 M4.5 .4 V2.4" stroke="#555" stroke-width="1" fill="none"/></svg>
  <div class="sep" style="left:243.6px;top:18px;height:11px"></div>
  <svg style="left:250.6px;top:19px;opacity:.3" width="9" height="9" viewBox="0 0 9 9"><path d="M.6 2.4 H8.4 M2.4 4.8 H8.4 M2.4 7.2 H8.4" stroke="#555" stroke-width="1" fill="none"/></svg>
  <svg style="left:264.6px;top:19px;opacity:.3" width="9" height="9" viewBox="0 0 9 9"><path d="M.6 2.4 H8.4 M.6 4.8 H6.4 M.6 7.2 H6.4" stroke="#555" stroke-width="1" fill="none"/></svg>
  <div class="sep" style="left:277.8px;top:18px;height:11px"></div>
  <svg style="left:285.4px;top:18.6px" width="10" height="10" viewBox="0 0 10 10"><path d="M4 1.4 H9.6 M4 3.8 H9.6 M.6 6.4 H9.6 M.6 9 H9.6" stroke="#222" stroke-width="1"/><path d="M.4 .4 L3 3 M3 .4 L.4 3" stroke="#c42b2b" stroke-width=".9"/></svg>
  <div class="sep" style="left:298.6px;top:18px;height:11px"></div>
  <svg style="left:305px;top:18.6px" width="10" height="10" viewBox="0 0 10 10"><path d="M.4 2.4 H4 M.4 5 H3 M.4 7.6 H4" stroke="#222" stroke-width="1"/><path d="M5 2.4 H9 V8 H5.4 M7 6.4 L5.2 8 L7 9.6" fill="none" stroke="#1c6fc4" stroke-width="1"/><path d="M7 .6 V4" stroke="#222" stroke-width="1"/></svg>
  <div class="sep" style="left:318.4px;top:18px;height:11px"></div>
  <svg style="left:325.6px;top:18.8px" width="10" height="10" viewBox="0 0 10 10"><circle cx="5" cy="5" r="4.1" fill="none" stroke="#222" stroke-width="1"/><path d="M5 2.4 V5.2 H7.2" fill="none" stroke="#222" stroke-width="1"/></svg>
  <!-- text area -->
  <div style="left:2.4px;top:30.8px;width:1220.6px;height:39.2px;background:#e8e9ea"></div>
  <div class="ot" style="top:31.3px">线程 '.NET TP Worker' (29484) 已退出，返回值为 0 (0x0)。</div>
  <div class="ot" style="top:41.05px">程序“[21708] Chapter17.exe: 程序跟踪”已退出，返回值为 0 (0x0)。</div>
  <div class="ot" style="top:50.8px">程序“[21708] Chapter17.exe”已退出，返回值为 0 (0x0)。</div>
  <!-- v scrollbar -->
  <div style="left:1223.2px;top:30.8px;width:11.4px;height:39.2px;background:#f1f1f4"></div>
  <svg style="left:1226.4px;top:36.4px" width="6" height="4" viewBox="0 0 6 4"><path d="M.2 3.6 L3 .4 L5.8 3.6 Z" fill="#7e7e84"/></svg>
  <div style="left:1225px;top:52.6px;width:8px;height:3px;background:#c2c3c9"></div>
  <div style="left:1222.8px;top:56.6px;width:12px;height:1.6px;background:#2a1f9c"></div>
  <svg style="left:1226.4px;top:62.6px" width="6" height="4" viewBox="0 0 6 4"><path d="M.2 .4 L3 3.6 L5.8 .4 Z" fill="#7e7e84"/></svg>
  <!-- h scrollbar -->
  <div style="left:2.4px;top:70px;width:1220.6px;height:10px;background:#f3f3f6"></div>
  <svg style="left:4.4px;top:72.2px" width="4" height="6" viewBox="0 0 4 6"><path d="M3.8 .2 L.4 3 L3.8 5.8 Z" fill="#7e7e84"/></svg>
  <div style="left:11.4px;top:72.2px;width:1148px;height:5.6px;background:#c2c3c6"></div>
  <svg style="left:1215px;top:72.2px" width="4" height="6" viewBox="0 0 4 6"><path d="M.2 .2 L3.6 3 L.2 5.8 Z" fill="#7e7e84"/></svg>
  <div style="left:0;top:80px;width:1235px;height:3.6px;background:#e6e6ea"></div>
  <div style="left:0;top:83.6px;width:1235px;height:1.2px;background:#f8fbff"></div>
</div>

<!-- ================= STATUS BAR ================= -->
<div id="status" style="left:0;top:671.2px;width:1280px;height:16.7px;background:#0c70ba;border-top:.8px solid #0a5fa3;border-bottom:.8px solid #0a5fa3">
  <svg style="left:3px;top:2.6px" width="10" height="10" viewBox="0 0 10 10"><path d="M.6 .8 H9.2 V6.8 H5.6 L3.6 8.8 V6.8 H.6 Z" fill="none" stroke="#fff" stroke-width=".95"/></svg>
  <div class="tx" style="left:19px;top:2.4px;color:#fff;font-size:7.8px">就绪</div>
  <svg style="left:1088.6px;top:2.6px" width="8" height="10" viewBox="0 0 8 10"><path d="M4 9.6 V.8 M.8 4 L4 .8 L7.2 4" fill="none" stroke="#fff" stroke-width=".95"/></svg>
  <div class="tx" style="left:1102px;top:2.4px;color:#fff;font-size:7.9px">添加到源代码管理</div>
  <div class="du" style="left:1170.4px;top:6px;border-bottom-color:#fff"></div>
  <svg style="left:1190.4px;top:2.8px" width="10" height="10" viewBox="0 0 10 10"><path d="M.6 .8 H9.2 V2.8 H.6 Z M1.6 2.8 V8.8 H8.2 V2.8 M3.4 4.6 H6.4 V6.4 H3.4 Z" fill="none" stroke="#fff" stroke-width=".9"/></svg>
  <div class="tx" style="left:1205px;top:2.4px;color:#fff;font-size:7.8px">选择仓库</div>
  <div class="du" style="left:1240.8px;top:6px;border-bottom-color:#fff"></div>
  <svg style="left:1261.6px;top:2.4px" width="9" height="10" viewBox="0 0 9 10"><path d="M1 7.4 C2.2 6.4 1.4 1 4.5 1 C7.6 1 6.8 6.4 8 7.4 Z M3.6 8.6 H5.4" fill="none" stroke="#fff" stroke-width=".95"/></svg>
</div>

<!-- ================= WINDOWS TASKBAR ================= -->
<div id="taskbar" style="left:0;top:688px;width:1280px;height:32px;background:linear-gradient(90deg,#cdf5ec 0%,#cef6f1 50%,#d0f6f4 100%)">
  <div style="left:0;top:0;width:1280px;height:1px;background:#d9fbf8"></div>
  <!-- widgets -->
  <svg style="left:13px;top:9.6px" width="16" height="14" viewBox="0 0 16 14"><path d="M8 1 L15 13 H1 Z" fill="#f2d31f" stroke="#e0bc10" stroke-width=".8" stroke-linejoin="round"/><path d="M8 5 V9.4 M8 10.6 V11.8" stroke="#3a3200" stroke-width="1.3"/></svg>
  <div style="left:20.2px;top:4px;width:10.2px;height:10.2px;border-radius:50%;background:#c42b1c"></div>
  <div class="tx" style="left:23.3px;top:4.2px;color:#fff;font-size:7.4px;font-weight:bold">1</div>
  <div class="tx" style="left:33.4px;top:5.9px;font-size:8px;color:#1b1b1b">空气污染预警</div>
  <div class="tx" style="left:33.4px;top:17px;font-size:8px;color:#5b6b69">已启动</div>
  <!-- start -->
  <svg style="left:484.4px;top:8.2px" width="16" height="16" viewBox="0 0 16 16"><defs><linearGradient id="wg" x1="0" y1="0" x2="1" y2="1"><stop offset="0" stop-color="#5cc8f8"/><stop offset="1" stop-color="#0a74d6"/></linearGradient></defs><path d="M0 0H7.5V7.5H0Z M8.5 0H16V7.5H8.5Z M0 8.5H7.5V16H0Z M8.5 8.5H16V16H8.5Z" fill="url(#wg)"/></svg>
  <!-- search pill -->
  <div style="left:510px;top:6px;width:144px;height:20px;border-radius:10px;background:#e6faf8;border:.8px solid #dcefed"></div>
  <svg style="left:516.4px;top:11.4px" width="10" height="10" viewBox="0 0 10 10"><circle cx="4" cy="4" r="3.1" fill="none" stroke="#222" stroke-width="1.1"/><path d="M6.3 6.3 L9.4 9.4" stroke="#222" stroke-width="1.2"/></svg>
  <div class="tx" style="left:533.4px;top:10.8px;font-size:8.6px;color:#5a6463">搜索</div>
  <!-- search highlight (squirrel) -->
  <svg style="left:623px;top:7px" width="28" height="19" viewBox="0 0 28 19"><path d="M1 17.2 H26" stroke="#8fa84a" stroke-width="1.8"/><path d="M19 16 C27.5 15 27 3.4 21.6 2.2 C17.6 1.6 15.8 5.4 18 8 C19.6 10 19.6 13 18 15.4 Z" fill="#e3cfa6"/><path d="M21 14.6 C25 12 24.6 5.2 21.4 4.2" fill="none" stroke="#c5a878" stroke-width="1.2"/><path d="M1.2 6.6 L5.4 4 C8 3.2 9.6 4.8 10 6.8 C14 7.4 18.4 10.4 18.6 16 H7.4 C7.6 12.6 6.4 10.4 4.8 9 C3.4 8.4 2.2 7.6 1.2 6.6 Z" fill="#d2b083"/><path d="M8.4 7.4 C12 8 15.4 10.6 16.6 14.6 M7.4 9.4 C10.4 10 13 12 14 15.4" fill="none" stroke="#7a5428" stroke-width=".9"/><path d="M5.4 4 L6.6 2 L7.6 4.2 Z" fill="#b88d55"/><circle cx="5.2" cy="5.8" r=".55" fill="#111"/><path d="M8 16 V17 M11.4 16 V17" stroke="#a07a46" stroke-width="1.1"/></svg>
  <!-- task view -->
  <svg style="left:663px;top:9px" width="17" height="15" viewBox="0 0 17 15"><rect x="5" y="0" width="11.4" height="11.4" rx="1.2" fill="#f4f4f4" stroke="#dcdcdc" stroke-width=".5"/><rect x=".2" y="3.8" width="12" height="10.6" rx="1.2" fill="#1c1c1c"/><rect x="5" y="3.8" width="7.2" height="7.4" fill="#9c9c9c"/></svg>
  <!-- store -->
  <svg style="left:692.6px;top:7.6px" width="16" height="17" viewBox="0 0 16 17"><path d="M4.6 4 V2.6 C4.6 .6 11.4 .6 11.4 2.6 V4" fill="none" stroke="#3f8fd6" stroke-width="1.2"/><rect x=".4" y="3.6" width="15.2" height="13" rx="2.6" fill="#1c5aa8"/><rect x="4.2" y="6.6" width="3.2" height="3.2" fill="#f25022"/><rect x="8.4" y="6.6" width="3.2" height="3.2" fill="#7fba00"/><rect x="4.2" y="10.8" width="3.2" height="3.2" fill="#00a4ef"/><rect x="8.4" y="10.8" width="3.2" height="3.2" fill="#ffb900"/></svg>
  <!-- explorer -->
  <svg style="left:721.4px;top:8.4px" width="17" height="15" viewBox="0 0 17 15"><path d="M.4 2 C.4 1 1 .6 1.8 .6 H6 L7.6 2.4 H15.4 C16.2 2.4 16.6 3 16.6 3.6 V13 C16.6 13.8 16 14.2 15.4 14.2 H1.6 C.8 14.2 .4 13.6 .4 13 Z" fill="#f8c52c"/><path d="M.4 5 H16.6 V13 C16.6 13.8 16 14.2 15.4 14.2 H1.6 C.8 14.2 .4 13.6 .4 13 Z" fill="#fbd75b"/><rect x="3.2" y="9" width="10.6" height="5.2" fill="#2f8ad8"/><rect x="5.6" y="11.2" width="5.8" height="1.2" fill="#9fd0f5"/></svg>
  <div class="run" style="left:727.6px"></div>
  <!-- WPS -->
  <svg style="left:750.6px;top:10.4px" width="17" height="12" viewBox="0 0 17 12"><path d="M.4 .4 H16.6 L12.6 11.6 L8.5 5.4 L4.4 11.6 Z" fill="#e3261c"/><path d="M3.6 2.2 L5 7.4 L8.5 2.2 L12 7.4 L13.4 2.2" fill="none" stroke="#cff6f2" stroke-width="1.15" stroke-linejoin="miter"/></svg>
  <div class="run" style="left:757.4px"></div>
  <!-- Visual Studio -->
  <svg style="left:780px;top:7.6px" width="17" height="17" viewBox="0 0 17 17"><path d="M12.2 .4 L16.6 2.4 V14.6 L12.2 16.6 L5 9.8 L2 12.4 L.4 11.6 V5.4 L2 4.6 L5 7.2 Z" fill="#a98ce6"/><path d="M12.2 .4 L16.6 2.4 V14.6 L12.2 16.6 Z" fill="#7a4fc8"/><path d="M12.2 5.2 L8 8.5 L12.2 11.8 Z" fill="#cff6f2"/><path d="M2.2 6.6 V10.4 L4.2 8.5 Z" fill="#cff6f2"/></svg>
  <div class="run" style="left:786.4px"></div>
  <!-- tray -->
  <svg style="left:983.6px;top:13.6px" width="7" height="5" viewBox="0 0 7 5"><path d="M.4 4.4 L3.5 .8 L6.6 4.4" fill="none" stroke="#222" stroke-width="1.1"/></svg>
  <svg style="left:1003.4px;top:11px" width="11" height="11" viewBox="0 0 11 11"><g fill="none" stroke="#e0709a" stroke-width="1.5"><ellipse cx="5.5" cy="3" rx="1.6" ry="2.2"/><ellipse cx="5.5" cy="8" rx="1.6" ry="2.2"/><ellipse cx="3" cy="5.5" rx="2.2" ry="1.6"/><ellipse cx="8" cy="5.5" rx="2.2" ry="1.6"/></g></svg>
  <svg style="left:1024.4px;top:11.4px" width="12" height="10" viewBox="0 0 12 10"><path d="M.6 1.6 C.6 1 1 .6 1.6 .6 H8.4 C9 .6 9.4 1 9.4 1.6 V5.4 C9.4 6 9 6.4 8.4 6.4 H4 L2 8 V6.4 H1.6 C1 6.4 .6 6 .6 5.4 Z" fill="#b9c4c2"/><path d="M3.6 3.8 C3.6 3.2 4 2.8 4.6 2.8 H10.6 C11.2 2.8 11.6 3.2 11.6 3.8 V7.4 C11.6 8 11.2 8.4 10.6 8.4 H10 V9.8 L8.2 8.4 H4.6 C4 8.4 3.6 8 3.6 7.4 Z" fill="#7cc98a"/></svg>
  <svg style="left:1045.6px;top:10.6px" width="11" height="11" viewBox="0 0 11 11"><rect width="11" height="11" fill="#111"/><path d="M2 5.6 C3.4 3.4 6.6 3 8.8 4.4 M2 5.6 C3.4 7.8 6.8 8.2 9 6.6 M4.4 4.2 V7.4" fill="none" stroke="#76b900" stroke-width="1"/></svg>
  <svg style="left:1067.6px;top:10px" width="12" height="13" viewBox="0 0 12 13"><path d="M5.4 .6 C7 1.8 8.6 2.2 10.2 2.2 C10.2 7 9 10 5.4 11.8 C1.8 10 .6 7 .6 2.2 C2.2 2.2 3.8 1.8 5.4 .6 Z" fill="#2f8be0"/><path d="M5.4 .6 C7 1.8 8.6 2.2 10.2 2.2 C10.2 7 9 10 5.4 11.8 Z" fill="#1466c0"/><path d="M8.6 7 L11.8 12.4 H5.4 Z" fill="#f7c81e"/><path d="M8.6 8.8 V10.6 M8.6 11.2 V11.8" stroke="#222" stroke-width=".8"/></svg>
  <svg style="left:1090.2px;top:10px" width="8" height="13" viewBox="0 0 8 13"><rect x="2.4" y=".6" width="3.2" height="7" rx="1.6" fill="none" stroke="#555" stroke-width="1"/><path d="M.8 6 C.8 10.2 7.2 10.2 7.2 6 M4 9.4 V12.2" fill="none" stroke="#555" stroke-width="1"/></svg>
  <div class="tx" style="left:1110.8px;top:11px;font-size:9.4px;color:#555;line-height:10px">中</div>
  <svg style="left:1134.6px;top:10.4px" width="12" height="12" viewBox="0 0 12 12"><rect width="12" height="12" rx="2.4" fill="#ef3f24"/><path d="M8.8 3.4 C7.4 2.2 3.6 2.4 3.6 4.4 C3.6 6.4 8.6 5.6 8.6 7.8 C8.6 9.8 4.4 9.8 3 8.6" fill="none" stroke="#fff" stroke-width="1.4"/></svg>
  <svg style="left:1160px;top:11.4px" width="12" height="9" viewBox="0 0 12 9"><path d="M.6 3 C3.6 0 8.4 0 11.4 3 M2.4 4.8 C4.4 2.8 7.6 2.8 9.6 4.8 M4.2 6.6 C5.2 5.6 6.8 5.6 7.8 6.6" fill="none" stroke="#222" stroke-width="1"/><circle cx="6" cy="8" r=".8" fill="#222"/></svg>
  <svg style="left:1176px;top:11.6px" width="12" height="9" viewBox="0 0 12 9"><path d="M.6 3 H2.4 L5 .8 V8.2 L2.4 6 H.6 Z" fill="none" stroke="#222" stroke-width=".9"/><path d="M7.4 2.8 L10.8 6.2 M10.8 2.8 L7.4 6.2" stroke="#222" stroke-width=".9"/></svg>
  <svg style="left:1191.6px;top:11px" width="13" height="10" viewBox="0 0 13 10"><rect x=".6" y="3.4" width="10.4" height="5.6" rx="1.4" fill="#222"/><rect x="11.2" y="5" width="1.4" height="2.4" fill="#222"/><path d="M2.4 3.4 C2.4 .6 5.4 .6 5 3 L7.4 .6" fill="none" stroke="#222" stroke-width="1.2"/></svg>
  <div class="tx" style="left:1200px;top:5.6px;width:51.4px;text-align:right;font-size:8.4px;color:#1b1b1b">19:01</div>
  <div class="tx" style="left:1200px;top:16.4px;width:51.4px;text-align:right;font-size:8.4px;color:#1b1b1b">2024/11/2</div>
  <svg style="left:1257.4px;top:10.6px" width="9" height="11" viewBox="0 0 9 11"><path d="M.6 8 C2 6.8 1.2 1 4.5 1 C7.8 1 7 6.8 8.4 8 Z" fill="#222"/><path d="M3.4 9.2 H5.6 V10.2 H3.4 Z" fill="#222"/></svg>
</div>

</div>
</body>
</html>
